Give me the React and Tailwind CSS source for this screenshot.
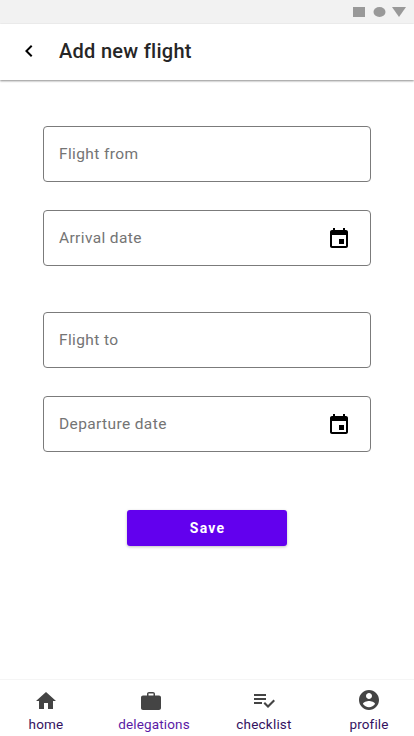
const paths = {
  back: 'M15.41 7.41L14 6l-6 6 6 6 1.41-1.41L10.83 12z',
  event: 'M17 12h-5v5h5v-5zM16 1v2H8V1H6v2H5c-1.11 0-1.99.9-1.99 2L3 19c0 1.1.89 2 2 2h14c1.1 0 2-.9 2-2V5c0-1.1-.9-2-2-2h-1V1h-2zm3 18H5V8h14v11z',
  home: 'M10 20v-6h4v6h5v-8h3L12 3 2 12h3v8z',
  work: 'M20 6.500h-4V5c0-1.100-.9-2-2-2h-4C8.900 3 8 3.900 8 5v1.500H4c-1.110 0-1.990.890-1.990 2L2 19c0 1.110.890 2 2 2h16c1.110 0 2-.890 2-2V8.500c0-1.110-.890-2-2-2zm-5.500 0h-5v-2h5v2z',
  checklist: 'M14 10H2v2h12v-2zm0-4H2v2h12V6zM2 16h8v-2H2v2zm19.500-4.500L23 13l-6.990 7-4.510-4.500L13 14l3.010 3 5.490-5.500z',
  profile: 'M12 2C6.480 2 2 6.480 2 12s4.480 10 10 10 10-4.480 10-10S17.520 2 12 2zm0 3c1.660 0 3 1.340 3 3s-1.340 3-3 3-3-1.340-3-3 1.340-3 3-3zm0 14.200c-2.500 0-4.710-1.280-6-3.220.03-1.990 4-3.080 6-3.080 1.990 0 5.970 1.090 6 3.080-1.290 1.940-3.500 3.220-6 3.220z',
};

function Icon({ name, className = '' }) {
  return (
    <svg viewBox="0 0 24 24" fill="currentColor" className={`size-6 shrink-0 ${className}`}>
      <path d={paths[name]} />
    </svg>
  );
}

function Field({ label, date }) {
  return (
    <div className="flex h-14 items-center justify-between rounded border border-[#7b7b7b] pl-[15px] pr-[19px]">
      <span className="text-[15.500px] leading-6 tracking-[0.38px] text-[#747474]">{label}</span>
      {date && <Icon name="event" className="mt-0.5 text-black" />}
    </div>
  );
}

function NavItem({ icon, label, className, iconClassName = '' }) {
  return (
    <a className={`flex flex-col items-center ${className}`}>
      <Icon name={icon} className={`text-[#444444] ${iconClassName}`} />
      <span className="mt-1 text-[13.500px] leading-4">{label}</span>
    </a>
  );
}

export default function App() {
  return (
    <div className="flex h-[736px] w-[414px] flex-col overflow-hidden bg-white font-['Roboto',sans-serif]">
      <div className="flex h-6 shrink-0 items-center justify-end bg-[#f2f2f2] pr-2">
        <svg width="54" height="10" viewBox="0 0 54 10" fill="#999999">
          <rect width="12" height="10" x="1" />
          <ellipse cx="27.500" cy="5" rx="6" ry="5" />
          <path d="M40 0h14l-7 10z" />
        </svg>
      </div>
      <header className="flex h-14 shrink-0 items-center bg-white pl-[17px] pb-0.5 shadow-[0_1px_2px_rgba(0,0,0,0.45)]">
        <Icon name="back" className="text-black" />
        <h1 className="ml-[18px] text-xl font-medium leading-6 tracking-[0.28px] text-[#262626]">Add new flight</h1>
      </header>
      <main className="flex grow flex-col px-[43px] pt-[46px]">
        <div className="flex flex-col gap-7">
          <Field label="Flight from" />
          <Field label="Arrival date" date />
        </div>
        <div className="mt-[46px] flex flex-col gap-7">
          <Field label="Flight to" />
          <Field label="Departure date" date />
        </div>
        <button className="mt-[58px] h-9 w-40 self-center rounded-[3px] bg-[#6200ee] pl-px text-sm font-bold tracking-[1.2px] text-white shadow-[0_1px_3px_rgba(0,0,0,0.25)]">
          Save
        </button>
      </main>
      <nav className="flex h-[57px] shrink-0 border-t border-[#f5f5f5] pl-[21px] pt-2">
        <NavItem icon="home" label="home" className="w-[50px] tracking-[0.2px] text-[#34125f]" iconClassName="translate-y-px" />
        <NavItem icon="work" label="delegations" className="ml-[43px] w-20 tracking-[0.150px] text-[#5a1aa5]" iconClassName="translate-y-px -translate-x-[3px]" />
        <NavItem icon="checklist" label="checklist" className="ml-[35px] w-[70px] tracking-[0.2px] text-[#34125f]" />
        <NavItem icon="profile" label="profile" className="ml-[45px] w-[50px] tracking-[0.1px] text-[#34125f]" />
      </nav>
    </div>
  );
}
